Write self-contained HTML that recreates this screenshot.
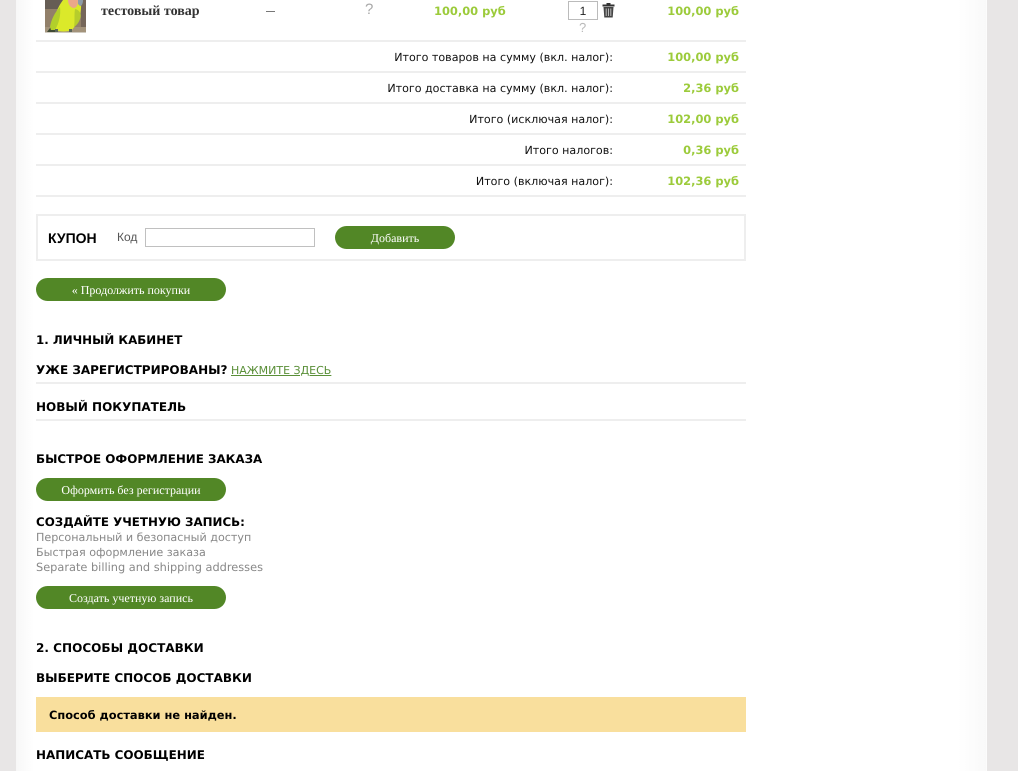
<!DOCTYPE html>
<html lang="ru">
<head>
<meta charset="utf-8">
<title>Оформление заказа</title>
<style>
html,body{margin:0;padding:0;width:1018px;height:771px;overflow:hidden;background:#e8e6e6;}
body{position:relative;font-family:"DejaVu Sans","Liberation Sans",sans-serif;font-size:11px;color:#111;text-rendering:geometricPrecision;}
#panel{position:absolute;left:16px;top:0;width:971px;height:771px;background:linear-gradient(to right,#f7f7f7 0,#fff 18px,#fff 942px,#f9f9f9 970px,#fff 971px);}
.t{position:absolute;white-space:nowrap;line-height:16px;height:16px;}
.r{text-align:right;}
.line{position:absolute;left:36px;width:710px;height:2px;background:#eee;}
.lbl{font-size:11.1px;}
.price{font-weight:bold;color:#9ccb3b;font-size:11.45px;}
.h{font-weight:bold;color:#000;font-size:12px;}
.btn{position:absolute;background:#528726;color:#fff;border-radius:12px;height:23px;line-height:24px;text-align:center;font-family:"Liberation Serif",serif;font-size:12px;white-space:nowrap;}
.gray{color:#888;font-size:11.15px;}
</style>
</head>
<body>
<div id="panel"></div>

<svg style="position:absolute;left:45px;top:0" width="41" height="33" viewBox="0 0 41 33">
<rect width="41" height="33" fill="#92806a"/>
<rect width="41" height="9" fill="#665d55"/>
<rect x="36" y="0" width="5" height="33" fill="#75665a"/>
<rect y="27" width="41" height="5" fill="#a3937b"/>
<path d="M2 32 L8 24 L12 32Z" fill="#3f4a35"/>
<path d="M10 30 C6 22 12 8 18 0 L36 0 C37 12 34 22 27 30 C22 32 15 32 10 30Z" fill="#dbe92a"/>
<path d="M5 27 C6 20 10 12 15 7 C16 15 14 23 10 30 L6 30Z" fill="#b2cf2b"/>
<path d="M30 9 C35 10 37 15 35 19 C34 22 32 25 29 27 C30 21 29 15 30 9Z" fill="#b6cd2c"/>
<path d="M23 0 L33 0 C33 5 32 8 28 8 C25 7 23 4 23 0Z" fill="#eba78a"/>
<path d="M33 0 L38 0 C38 3 37 6 35 6 L33 4Z" fill="#8d9ca8"/>
<rect x="10" y="29" width="3" height="3" fill="#59655a"/>
<rect x="24" y="29" width="3" height="3" fill="#59655a"/>
<rect y="32" width="41" height="1" fill="#cfcac0"/>
</svg>

<div class="t" style="left:101px;top:4px;font-family:'Liberation Serif',serif;font-weight:bold;font-size:14px;color:#333;">тестовый товар</div>
<div style="position:absolute;left:266px;top:11px;width:9px;height:1px;background:#777;"></div>
<div class="t" style="left:365px;top:2px;font-family:'Liberation Sans',sans-serif;font-size:15px;color:#aaa;">?</div>
<div class="t price" style="left:434px;top:3px;">100,00 руб</div>
<div style="position:absolute;left:568px;top:1px;width:28px;height:17px;border:1px solid #bbb;background:#fff;text-align:center;line-height:18px;font-size:12px;color:#222;font-family:'Liberation Sans',sans-serif;">1</div>
<svg style="position:absolute;left:602px;top:3px" width="13" height="15" viewBox="0 0 13 15">
<rect x="4.5" y="0" width="4" height="2" fill="#333"/>
<rect x="0.5" y="1.5" width="12" height="2" fill="#333"/>
<path d="M1.5 4 H11.5 L10.7 14.5 H2.3Z" fill="#444"/>
<path d="M4.2 5.5V13M6.5 5.5V13M8.8 5.5V13" stroke="#bbb" stroke-width="1"/>
</svg>
<div class="t" style="left:579px;top:20px;font-family:'Liberation Sans',sans-serif;font-size:13px;color:#bbb;">?</div>
<div class="t price r" style="left:600px;width:139px;top:3px;">100,00 руб</div>

<div class="line" style="top:40px"></div>
<div class="t r lbl" style="left:300px;width:313px;top:50px;">Итого товаров на сумму (вкл. налог):</div>
<div class="t price r" style="left:600px;width:139px;top:49px;">100,00 руб</div>
<div class="line" style="top:71px"></div>
<div class="t r lbl" style="left:300px;width:313px;top:81px;">Итого доставка на сумму (вкл. налог):</div>
<div class="t price r" style="left:600px;width:139px;top:80px;">2,36 руб</div>
<div class="line" style="top:102px"></div>
<div class="t r lbl" style="left:300px;width:313px;top:112px;">Итого (исключая налог):</div>
<div class="t price r" style="left:600px;width:139px;top:111px;">102,00 руб</div>
<div class="line" style="top:133px"></div>
<div class="t r lbl" style="left:300px;width:313px;top:143px;">Итого налогов:</div>
<div class="t price r" style="left:600px;width:139px;top:142px;">0,36 руб</div>
<div class="line" style="top:164px"></div>
<div class="t r lbl" style="left:300px;width:313px;top:174px;">Итого (включая налог):</div>
<div class="t price r" style="left:600px;width:139px;top:173px;">102,36 руб</div>
<div class="line" style="top:195px"></div>

<div style="position:absolute;left:36px;top:214px;width:706px;height:43px;border:2px solid #eee;"></div>
<div class="t" style="left:48px;top:230px;font-family:'Liberation Sans',sans-serif;font-weight:bold;font-size:14px;color:#000;">КУПОН</div>
<div class="t" style="left:117px;top:229px;font-family:'Liberation Sans',sans-serif;font-size:12px;color:#555;">Код</div>
<div style="position:absolute;left:145px;top:228px;width:168px;height:17px;border:1px solid #c0c0c0;background:#fff;"></div>
<div class="btn" style="left:335px;top:226px;width:120px;">Добавить</div>
<div class="btn" style="left:36px;top:278px;width:190px;">« Продолжить покупки</div>

<div class="t h" style="left:36px;top:332px;font-size:11.85px;">1. ЛИЧНЫЙ КАБИНЕТ</div>
<div class="t h" style="left:36px;top:362px;">УЖЕ ЗАРЕГИСТРИРОВАНЫ?</div>
<div class="t" style="left:231px;top:363px;color:#5a8f38;text-decoration:underline;">НАЖМИТЕ ЗДЕСЬ</div>
<div class="line" style="top:382px"></div>
<div class="t h" style="left:36px;top:399px;">НОВЫЙ ПОКУПАТЕЛЬ</div>
<div class="line" style="top:419px"></div>
<div class="t h" style="left:36px;top:451px;font-size:11.9px;">БЫСТРОЕ ОФОРМЛЕНИЕ ЗАКАЗА</div>
<div class="btn" style="left:36px;top:478px;width:190px;">Оформить без регистрации</div>
<div class="t h" style="left:36px;top:514px;font-size:11.85px;">СОЗДАЙТЕ УЧЕТНУЮ ЗАПИСЬ:</div>
<div class="t gray" style="left:36px;top:530px;">Персональный и безопасный доступ</div>
<div class="t gray" style="left:36px;top:545px;">Быстрая оформление заказа</div>
<div class="t gray" style="left:36px;top:559px;font-size:11.35px;">Separate billing and shipping addresses</div>
<div class="btn" style="left:36px;top:586px;width:190px;">Создать учетную запись</div>

<div class="t h" style="left:36px;top:640px;font-size:12.05px;">2. СПОСОБЫ ДОСТАВКИ</div>
<div class="t h" style="left:36px;top:670px;">ВЫБЕРИТЕ СПОСОБ ДОСТАВКИ</div>
<div style="position:absolute;left:36px;top:697px;width:710px;height:35px;background:#f9df9d;"></div>
<div class="t" style="left:49px;top:707px;font-weight:bold;color:#000;font-size:11.4px;">Способ доставки не найден.</div>
<div class="t h" style="left:36px;top:747px;font-size:11.95px;">НАПИСАТЬ СООБЩЕНИЕ</div>
</body>
</html>
